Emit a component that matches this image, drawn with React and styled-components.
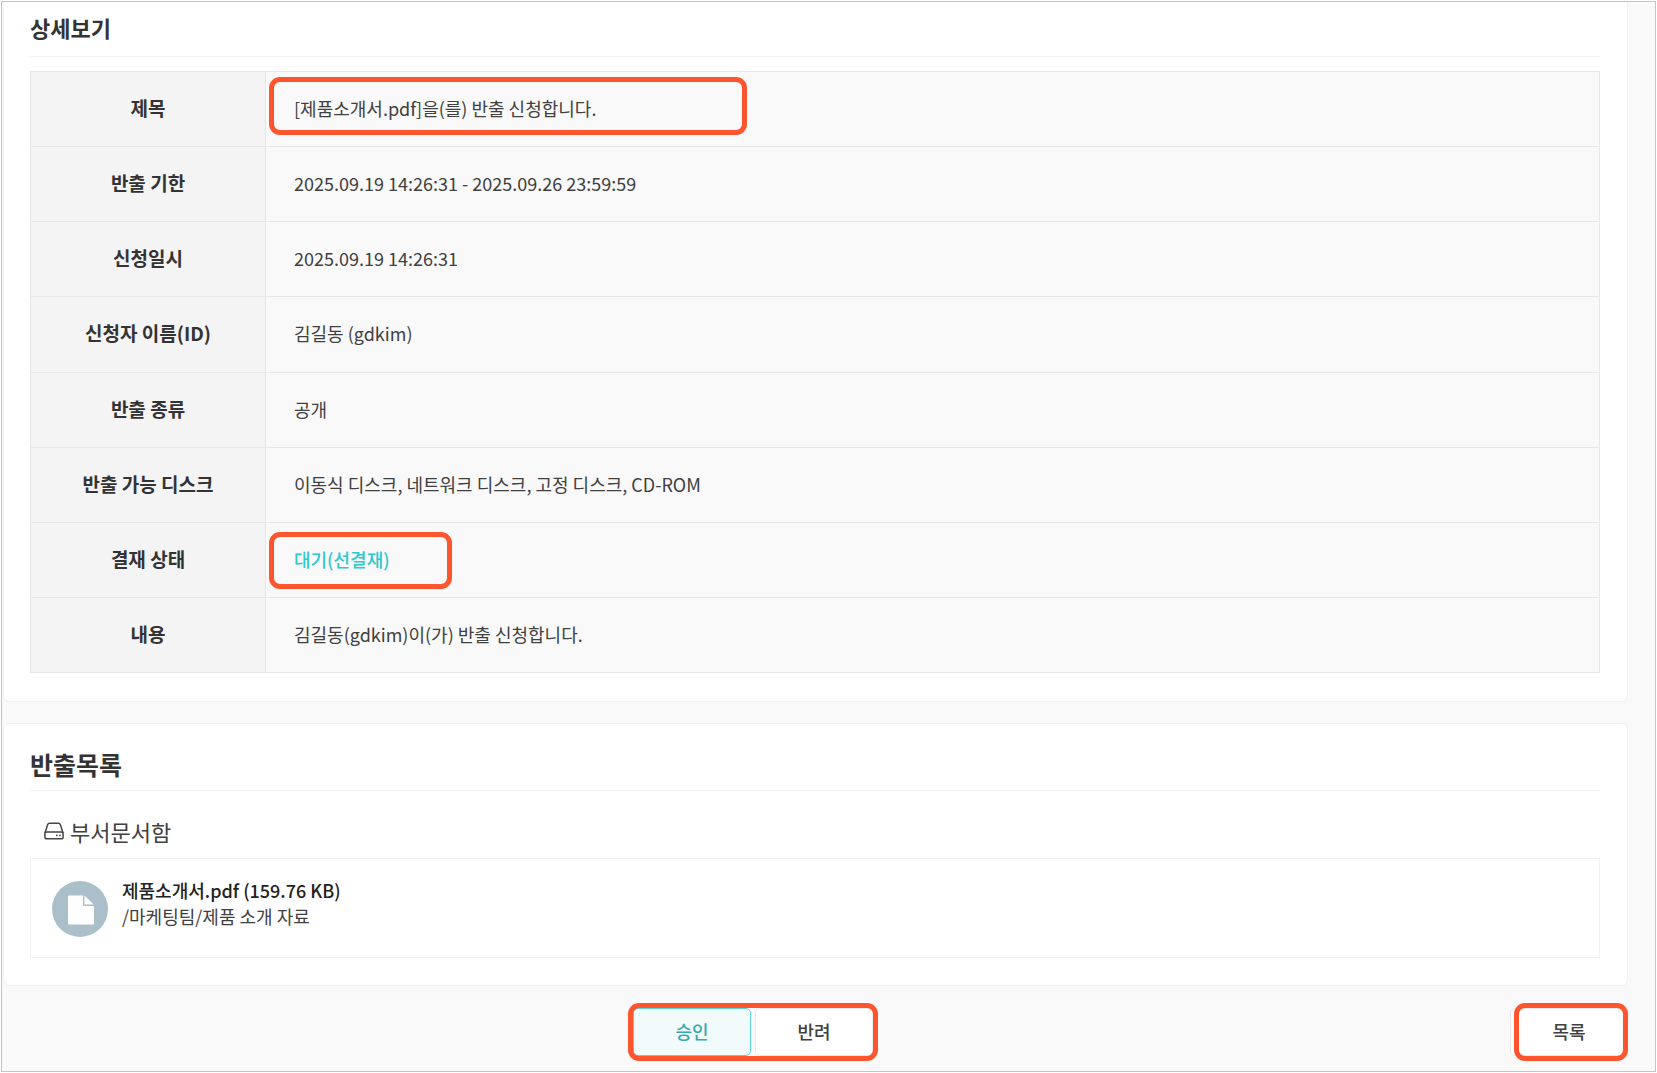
import React from 'react'
import styled, { createGlobalStyle } from 'styled-components';

const details = [
    { label: '제목', value: '[제품소개서.pdf]을(를) 반출 신청합니다.', mark: 'title' },
    { label: '반출 기한', value: '2025.09.19 14:26:31 - 2025.09.26 23:59:59' },
    { label: '신청일시', value: '2025.09.19 14:26:31' },
    { label: '신청자 이름(ID)', value: '김길동 (gdkim)' },
    { label: '반출 종류', value: '공개' },
    { label: '반출 가능 디스크', value: '이동식 디스크, 네트워크 디스크, 고정 디스크, CD-ROM' },
    { label: '결재 상태', value: '대기(선결재)', mark: 'status' },
    { label: '내용', value: '김길동(gdkim)이(가) 반출 신청합니다.' },
];

const files = [
    { name: '제품소개서.pdf', size: '159.76 KB', path: '/마케팅팀/제품 소개 자료' },
];

const DriveIcon = () => (
    <svg width="20" height="18" viewBox="0 0 20 18" fill="none" stroke="#444" strokeWidth="1.5" aria-hidden="true">
        <path d="M1 11 3.6 2.7Q4.1 1.2 5.6 1.2H14.4Q15.9 1.2 16.4 2.7L19 11" />
        <rect x="0.9" y="9.9" width="18.2" height="6.9" rx="1.8" />
        <circle cx="12.8" cy="13.4" r="0.9" fill="#444" stroke="none" />
        <circle cx="16" cy="13.4" r="0.9" fill="#444" stroke="none" />
    </svg>
)

const FileIcon = () => (
    <svg width="56" height="56" viewBox="0 0 56 56" aria-hidden="true">
        <circle cx="28" cy="28" r="28" fill="#aabfc9" />
        <path d="M17 14.5H31V25H42V42.5Q42 43.5 41 43.5H17Q16 43.5 16 42.5V15.5Q16 14.5 17 14.5Z" fill="#fff" />
        <path d="M32.4 14.5 41.8 23.6H32.4Z" fill="#fff" />
    </svg>
)

const DetailTable = () => {
    return (
        <Table>
            <tbody>
                {details.map(({ label, value, mark }) => (
                    <tr key={label}>
                        <Label scope="row">{label}</Label>
                        <Value>
                            {mark === 'status' ? <Status>{value}</Status> : value}
                            {mark === 'title' && <TitleMark />}
                            {mark === 'status' && <StatusMark />}
                        </Value>
                    </tr>
                ))}
            </tbody>
        </Table>
    )
}

const FileItem = ({ file }) => {
    return (
        <FileRow>
            <FileIcon />
            <FileText>
                <strong>{file.name} ({file.size})</strong>
                <span>{file.path}</span>
            </FileText>
        </FileRow>
    )
}

const App = () => {
    return (
        <>
            <GlobalStyle />
            <Page>
                <DetailCard>
                    <DetailHeading>상세보기</DetailHeading>
                    <DetailTable />
                </DetailCard>

                <ListCard>
                    <ListHeading>반출목록</ListHeading>
                    <Folder>
                        <DriveIcon />
                        부서문서함
                    </Folder>
                    <FileList>
                        {files.map(file => <FileItem key={file.name} file={file} />)}
                    </FileList>
                </ListCard>

                <Actions>
                    <Decision>
                        <ButtonGroup>
                            <Button type="button" $primary>승인</Button>
                            <Button type="button">반려</Button>
                            <GroupMark />
                        </ButtonGroup>
                    </Decision>
                    <ListButton>
                        <Button type="button">목록</Button>
                        <ListMark />
                    </ListButton>
                </Actions>
            </Page>
        </>
    )
}

export default App;

const GlobalStyle = createGlobalStyle`
    * {
        box-sizing: border-box;
    }

    body {
        margin: 0;
        padding: 1px;
        background-color: #fff;
        color: #404040;
        font-family: "Noto Sans CJK KR", "Noto Sans", sans-serif;
        font-size: 18px;
    }
`;

const Page = styled.main`
    padding: 0 27px 15px 1px;
    border: 1px solid #c4c4c4;
    background-color: #f9f9f9;
`;

const Card = styled.section`
    padding: 0 27px 0 26px;
    border: 1px solid #f1f1f1;
    border-radius: 6px;
    background-color: #fff;
`;

const DetailCard = styled(Card)`
    padding-bottom: 28px;
    border-top: 0;
    border-radius: 0 0 6px 6px;
`;

const ListCard = styled(Card)`
    margin-top: 21px;
    padding-top: 22px;
    padding-bottom: 27px;
`;

const Heading = styled.h2`
    margin: 0;
    border-bottom: 1px solid #f1f1f1;
    color: #333;
    font-weight: 700;
`;

const DetailHeading = styled(Heading)`
    margin-bottom: 14px;
    padding: 9px 0 13px;
    font-size: 22px;
    line-height: 32px;
`;

const ListHeading = styled(Heading)`
    padding: 0 0 8px;
    font-size: 25px;
    line-height: 36px;
`;

const Table = styled.table`
    width: 100%;
    height: 602px;
    border-collapse: collapse;
    background-color: #f9f9f9;
`;

const Label = styled.th`
    width: 235px;
    padding: 0 0 2px;
    border: 1px solid #e7e7e7;
    background-color: #f4f4f4;
    color: #333;
    font-size: 19px;
    font-weight: 700;
    line-height: 28px;
`;

const Value = styled.td`
    position: relative;
    padding: 0 28px 2px;
    border: 1px solid #e7e7e7;
    line-height: 28px;
`;

const Status = styled.span`
    color: #2ec8cf;
    font-weight: 500;
`;

/* orange frames lie over the things to look at */
const Mark = styled.span`
    position: absolute;
    border: 5px solid #ff552e;
    border-radius: 11px;
    pointer-events: none;
`;

const TitleMark = styled(Mark)`
    top: 5px;
    left: 3px;
    width: 478px;
    height: 58px;
`;

const StatusMark = styled(Mark)`
    top: 9px;
    left: 3px;
    width: 183px;
    height: 57px;
`;

const GroupMark = styled(Mark)`
    inset: -5px;
`;

const ListMark = styled(Mark)`
    inset: -5px 0 -5px 4px;
`;

const Folder = styled.h3`
    display: flex;
    align-items: center;
    gap: 6px;
    margin: 0;
    padding: 24px 14px 11px;
    font-size: 22px;
    font-weight: 400;
    line-height: 32px;
`;

const FileList = styled.ul`
    margin: 0;
    padding: 0;
    border: 1px solid #f1f1f1;
    list-style: none;
`;

const FileRow = styled.li`
    display: flex;
    gap: 14px;
    padding: 22px 21px 20px;
`;

const FileText = styled.div`
    display: flex;
    flex-direction: column;
    margin-top: -4px;
    line-height: 26px;

    >strong {
        color: #222;
        font-weight: 500;
    }
`;

const Actions = styled.div`
    display: flex;
    gap: 7px;
    margin-top: 22px;
`;

const Decision = styled.div`
    display: flex;
    flex: 1;
    justify-content: center;
`;

const ButtonGroup = styled.div`
    position: relative;
    display: flex;
    gap: 4px;
`;

const ListButton = styled.div`
    position: relative;
`;

const Button = styled.button`
    width: 118px;
    height: 48px;
    padding: 0 0 2px;
    border: 1px solid ${({ $primary }) => $primary ? '#5fd3d5' : '#ebebeb'};
    border-radius: 5px;
    background-color: ${({ $primary }) => $primary ? '#f2fbfb' : '#fff'};
    color: ${({ $primary }) => $primary ? '#36a9ac' : '#404040'};
    font-family: inherit;
    font-size: 18px;
    font-weight: 500;
    cursor: pointer;
`;
